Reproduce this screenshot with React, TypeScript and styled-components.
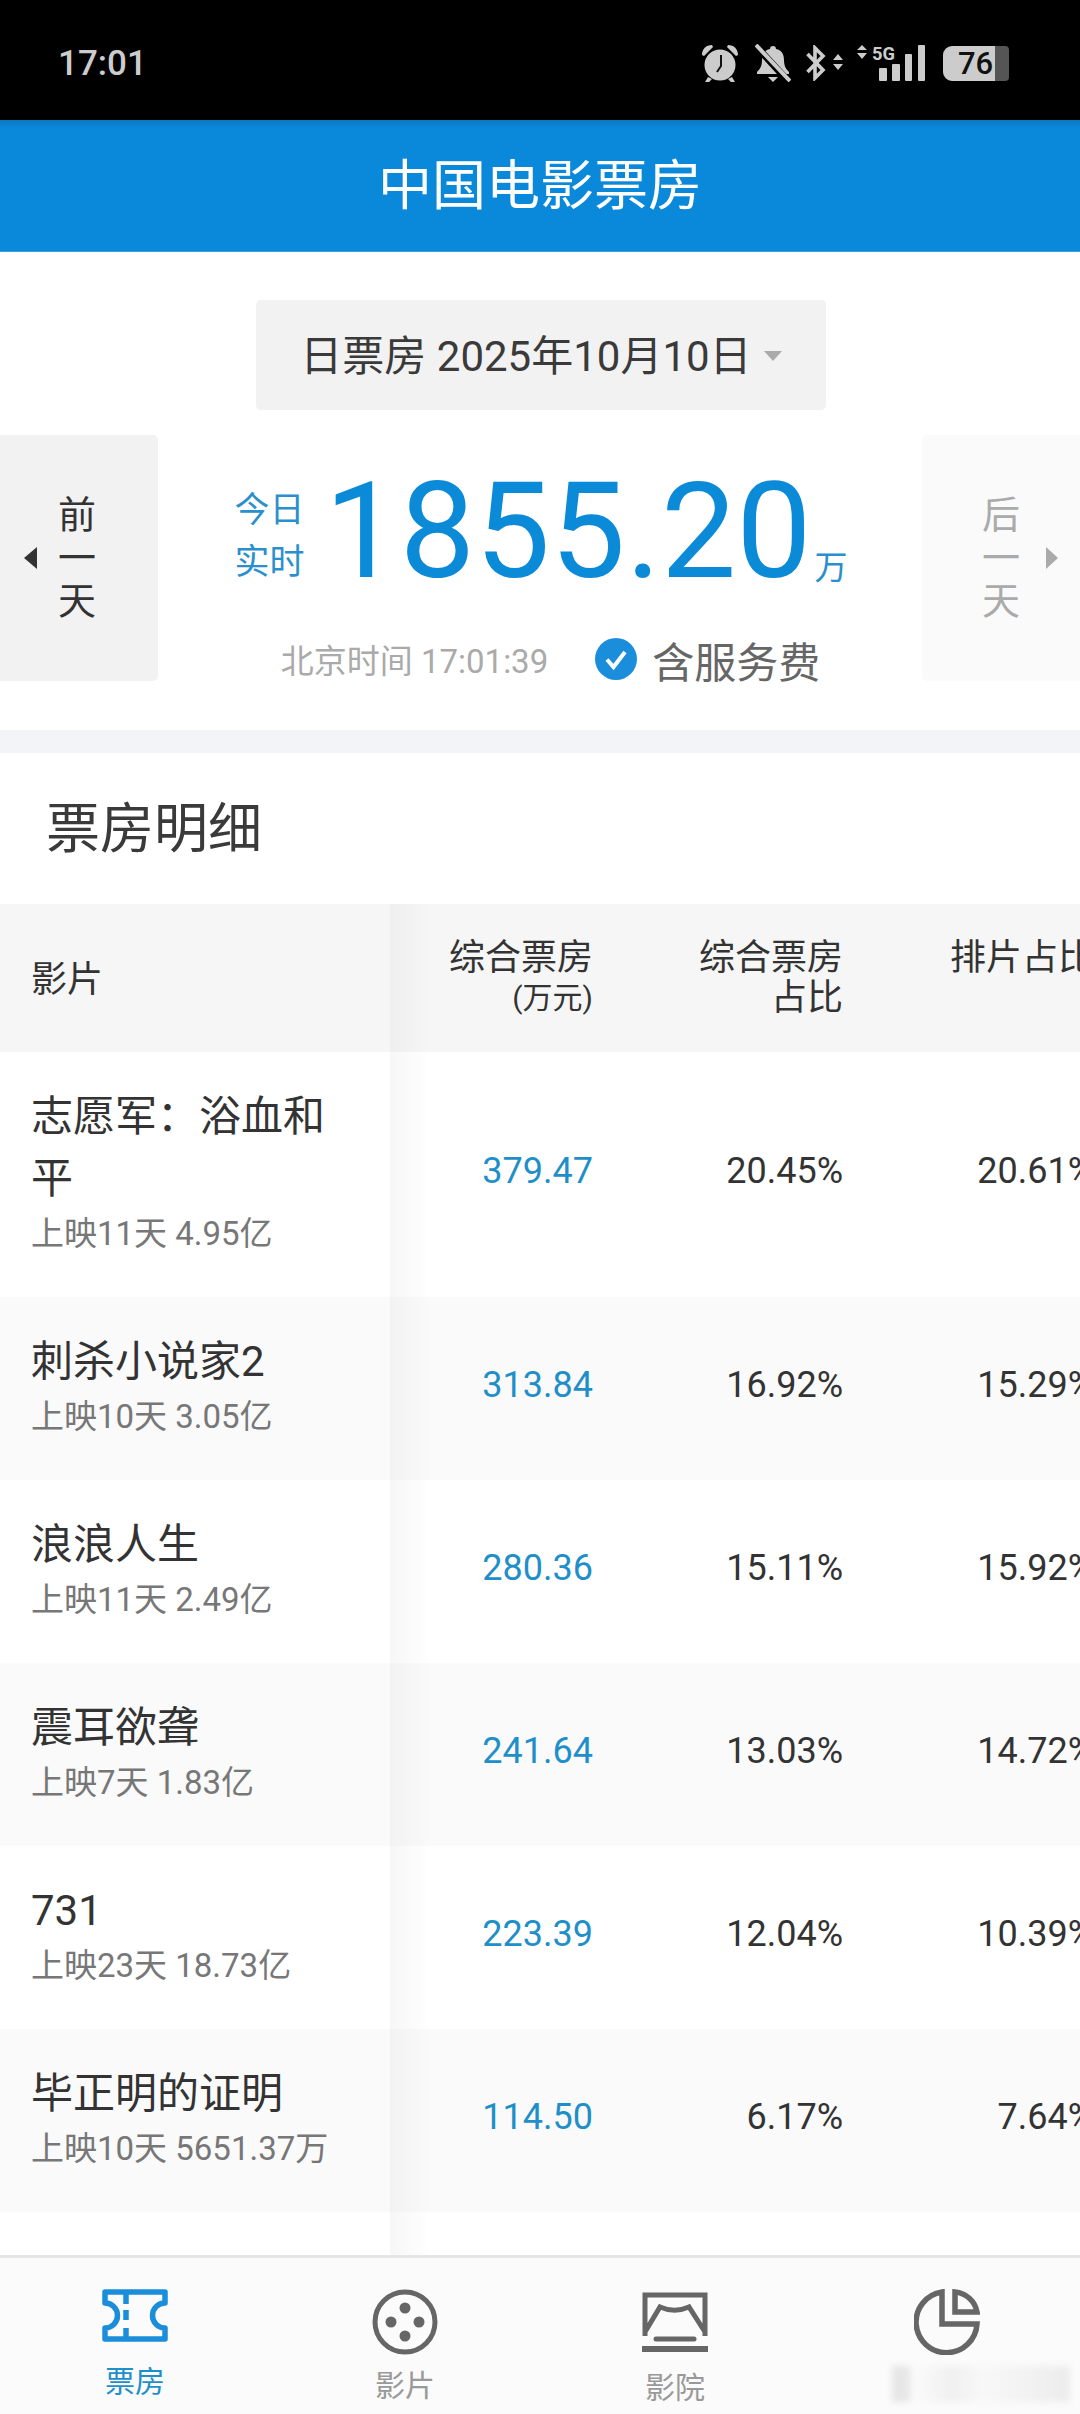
import * as React from 'react';
import styled, {createGlobalStyle} from 'styled-components';

const GlobalStyle = createGlobalStyle`
  html, body {
    margin: 0;
    padding: 0;
    background: #fff;
  }
  body {
    font-family: Roboto, "Noto Sans CJK SC", sans-serif;
  }
`;

const Page = styled.div`
  width: 1080px;
  height: 2414px;
  display: flex;
  flex-direction: column;
  overflow: hidden;
  background: #fff;
`;

const StatusBar = styled.div`
  height: 120px;
  flex: none;
  background: #000;
  display: flex;
  align-items: center;
  justify-content: space-between;
  padding: 6px 71px 0 58px;
  box-sizing: border-box;
  color: #ccc;
`;

const Clock = styled.span`
  font-size: 35px;
  font-weight: 500;
`;

const StatusIcons = styled.div`
  display: flex;
  align-items: center;
`;

const StatusIcon = styled.svg<{$gap?: number}>`
  display: block;
  margin-left: ${p => p.$gap ?? 0}px;
`;

const Battery = styled.div`
  width: 66px;
  height: 35px;
  margin-left: 18px;
  border-radius: 9px 4px 4px 9px;
  background: linear-gradient(to right, #ccc 52px, #555 52px);
  color: #111;
  font-size: 31px;
  font-weight: 500;
  line-height: 35px;
  padding-left: 15px;
  box-sizing: border-box;
`;

const Header = styled.header`
  height: 132px;
  flex: none;
  box-sizing: border-box;
  background: linear-gradient(to bottom, #0a78bf 0, #0a88da 8px);
  color: #fff;
  font-size: 54px;
  line-height: 133px;
  text-align: center;
  border-bottom: 1px solid #3a9fdd;
`;

const Content = styled.main`
  flex: 1;
  min-height: 0;
  overflow: hidden;
`;

const Hero = styled.section`
  padding: 48px 0 49px;
`;

const DateSelect = styled.div`
  width: 570px;
  height: 110px;
  margin: 0 auto 25px 256px;
  padding-bottom: 5px;
  box-sizing: border-box;
  border-radius: 5px;
  background: #f2f2f3;
  color: #3a3a3a;
  font-size: 42px;
  display: flex;
  align-items: center;
  justify-content: center;
  gap: 12px;
`;

const Caret = styled.i`
  width: 0;
  height: 0;
  border-left: 9px solid transparent;
  border-right: 9px solid transparent;
  border-top: 10px solid #aaa;
  margin-top: 7px;
`;

const HeroRow = styled.div`
  display: flex;
  height: 246px;
`;

const DayButton = styled.div<{$next?: boolean}>`
  width: 158px;
  flex: none;
  display: flex;
  flex-direction: ${p => (p.$next ? 'row' : 'row-reverse')};
  align-items: center;
  justify-content: ${p => (p.$next ? 'flex-start' : 'flex-end')};
  gap: ${p => (p.$next ? '25px' : '20px')};
  padding: ${p => (p.$next ? '0 0 0 59px' : '0 0 0 24px')};
  box-sizing: border-box;
  background: ${p => (p.$next ? '#fafafa' : '#f2f2f3')};
  border-radius: ${p => (p.$next ? '5px 0 0 5px' : '0 5px 5px 0')};
  color: ${p => (p.$next ? '#aaa' : '#333')};
  font-size: 38px;
`;

const DayText = styled.div`
  width: 40px;
  line-height: 43px;
  text-align: center;
`;

const DayArrow = styled.i<{$next?: boolean}>`
  width: 0;
  height: 0;
  border-top: 11px solid transparent;
  border-bottom: 11px solid transparent;
  ${p =>
    p.$next ? 'border-left: 12px solid #aaa;' : 'border-right: 13px solid #333;'}
`;

const HeroCenter = styled.div`
  flex: 1;
  display: flex;
  flex-direction: column;
  align-items: center;
`;

const Amount = styled.div`
  display: flex;
  align-items: flex-end;
  height: 150px;
  margin-top: 22px;
  padding-left: 2px;
  color: #0b8ad8;
`;

const AmountLabel = styled.div`
  font-size: 35px;
  line-height: 52px;
  color: #2a8fcd;
  margin-bottom: 18px;
  margin-right: 20px;
`;

const AmountValue = styled.div`
  font-size: 134px;
  line-height: 150px;
`;

const AmountUnit = styled.div`
  font-size: 33px;
  line-height: 40px;
  color: #2a8fcd;
  margin-left: 3px;
  margin-bottom: 19px;
`;

const Meta = styled.div`
  display: flex;
  align-items: center;
  margin: 30px 0 0 21px;
  height: 44px;
`;

const ClockText = styled.span`
  font-size: 33px;
  color: #aaa;
  margin-right: 47px;
`;

const FeeText = styled.span`
  font-size: 42px;
  color: #666;
  margin-left: 15px;
`;

const Band = styled.div`
  height: 23px;
  background: #f3f4f8;
`;

const SectionTitle = styled.h2`
  margin: 0;
  height: 151px;
  padding-left: 46px;
  box-sizing: border-box;
  font-size: 54px;
  font-weight: 400;
  line-height: 154px;
  color: #3a3a3a;
`;

const Row = styled.div<{$striped?: boolean; $head?: boolean}>`
  display: grid;
  grid-template-columns: 390px 203px 250px 251px;
  width: 1094px;
  background: ${p => (p.$head ? '#f6f6f6' : p.$striped ? '#fafafa' : '#fff')};
`;

const NameCell = styled.div`
  position: relative;
  padding: 34px 31px 39px;
  box-sizing: border-box;
  &::after {
    content: '';
    position: absolute;
    top: 0;
    bottom: 0;
    left: 100%;
    width: 42px;
    background: linear-gradient(to right, rgba(0, 0, 0, 0.03), rgba(0, 0, 0, 0));
  }
`;

const HeadName = styled(NameCell)`
  height: 148px;
  padding: 0 31px;
  font-size: 36px;
  line-height: 152px;
  color: #333;
`;

const HeadCell = styled.div`
  padding-top: 34px;
  font-size: 36px;
  line-height: 40px;
  color: #333;
  text-align: right;
`;

const HeadUnit = styled.div`
  font-size: 30px;
`;

const FilmName = styled.div`
  font-size: 42px;
  line-height: 62px;
  color: #333;
`;

const FilmMeta = styled.div`
  font-size: 33px;
  line-height: 48px;
  color: #777;
`;

const ValueCell = styled.div<{$accent?: boolean}>`
  display: flex;
  align-items: center;
  justify-content: flex-end;
  padding-bottom: 8px;
  font-size: 36px;
  color: ${p => (p.$accent ? '#1f8fc9' : '#333')};
`;

const BlankRow = styled(Row)`
  height: 60px;
`;

const TabBar = styled.nav`
  height: 159px;
  flex: none;
  box-sizing: border-box;
  display: grid;
  grid-template-columns: repeat(4, 270px);
  background: #fbfbfb;
  border-top: 3px solid #e6e6e6;
`;

const Tab = styled.div<{$active?: boolean}>`
  display: flex;
  flex-direction: column;
  align-items: center;
  padding-top: 31px;
  font-size: 30px;
  line-height: 40px;
  color: ${p => (p.$active ? '#1f8fc9' : '#999')};
`;

const TabIcon = styled.svg<{$top?: number; $bottom: number; $left?: number}>`
  display: block;
  margin: ${p => p.$top ?? 0}px 0 ${p => p.$bottom}px ${p => p.$left ?? 0}px;
`;

const BlurredLabel = styled.div`
  width: 178px;
  height: 36px;
  margin-left: 72px;
  margin-top: -2px;
  filter: blur(3px);
  background: linear-gradient(
    to right,
    #e6e6e6 0,
    #e6e6e6 14px,
    #fbfbfb 22px,
    #f0f0f0 60px,
    #f8f8f8 90px,
    #f0f0f0 150px,
    #ececec 178px
  );
`;

const films = [
  {name: '志愿军：浴血和平', meta: '上映11天 4.95亿', box: '379.47', share: '20.45%', shows: '20.61%'},
  {name: '刺杀小说家2', meta: '上映10天 3.05亿', box: '313.84', share: '16.92%', shows: '15.29%'},
  {name: '浪浪人生', meta: '上映11天 2.49亿', box: '280.36', share: '15.11%', shows: '15.92%'},
  {name: '震耳欲聋', meta: '上映7天 1.83亿', box: '241.64', share: '13.03%', shows: '14.72%'},
  {name: '731', meta: '上映23天 18.73亿', box: '223.39', share: '12.04%', shows: '10.39%'},
  {name: '毕正明的证明', meta: '上映10天 5651.37万', box: '114.50', share: '6.17%', shows: '7.64%'},
];

const AlarmIcon = () => (
  <StatusIcon width="38" height="39" viewBox="0 0 38 39">
    <circle cx="19" cy="21" r="15.5" fill="#ccc" />
    <path d="M1 11C1 5 5 1 11 1L12 3 3 12Z M37 11C37 5 33 1 27 1L26 3 35 12Z" fill="#ccc" />
    <path d="M7 33 4 38h4l3-3Z M31 33l3 5h-4l-3-3Z" fill="#ccc" />
    <path d="M20 11v11l-4 6" fill="none" stroke="#111" strokeWidth="2" />
  </StatusIcon>
);

const BellOffIcon = () => (
  <StatusIcon $gap={16} width="36" height="38" viewBox="0 0 36 38">
    <path
      d="M18 2c2 0 3 1 3 3 6 1 8 6 8 11 0 6 2 9 5 12v2H2v-2c3-3 5-6 5-12 0-5 2-10 8-11 0-2 1-3 3-3Z M13 33h10l-5 5Z"
      fill="#ccc"
    />
    <path d="M0 1 34 38" stroke="#000" strokeWidth="7" />
    <path d="M1 1 35 37" stroke="#ccc" strokeWidth="4" />
  </StatusIcon>
);

const BluetoothIcon = () => (
  <StatusIcon $gap={15} width="38" height="36" viewBox="0 0 38 36">
    <path d="M1.500 9 17 25 9 33V3L17 11 1.500 27" fill="none" stroke="#ccc" strokeWidth="3.6" />
    <path d="M27 15h10l-5-6Z M27 19h10l-5 6Z" fill="#ccc" />
  </StatusIcon>
);

const SignalIcon = () => (
  <StatusIcon $gap={13} width="68" height="38" viewBox="0 0 68 38">
    <path d="M0 6h10L5 1Z M0 9h10L5 15Z" fill="#ccc" />
    <text x="15" y="16" fontFamily="Roboto, sans-serif" fontSize="19" fontWeight="700" fill="#ccc" textLength="23" lengthAdjust="spacingAndGlyphs">
      5G
    </text>
    <rect x="22" y="24" width="8" height="13" rx="1" fill="#ccc" />
    <rect x="35" y="20" width="8" height="17" rx="1" fill="#ccc" />
    <rect x="48" y="10" width="7" height="27" rx="1" fill="#ccc" />
    <rect x="61" y="1" width="7" height="36" rx="1" fill="#ccc" />
  </StatusIcon>
);

const CheckIcon = () => (
  <svg width="42" height="42" viewBox="0 0 42 42">
    <circle cx="21" cy="21" r="21" fill="#1a8ddb" />
    <path d="M12 21.5 18.5 29 30 14" fill="none" stroke="#fff" strokeWidth="4" />
  </svg>
);

const TicketIcon = () => (
  <TabIcon $bottom={20} width="66" height="53" viewBox="0 0 66 53">
    <path
      d="M3 3H63V14A12.500 12.500 0 0 0 63 39V50H3V39A12.500 12.500 0 0 0 3 14Z"
      fill="none"
      stroke="#1a8ddb"
      strokeWidth="5.500"
      strokeLinejoin="round"
    />
    <path d="M24 1V15M24 21V31M24 39V52" stroke="#1a8ddb" strokeWidth="5.500" />
  </TabIcon>
);

const ReelIcon = () => (
  <TabIcon $bottom={11} width="66" height="66" viewBox="0 0 66 66">
    <circle cx="33" cy="33" r="30" fill="none" stroke="#666" strokeWidth="5" />
    <circle cx="33" cy="19" r="5.500" fill="#666" />
    <circle cx="33" cy="47" r="5.500" fill="#666" />
    <circle cx="19" cy="33" r="5.500" fill="#666" />
    <circle cx="47" cy="33" r="5.500" fill="#666" />
  </TabIcon>
);

const CinemaIcon = () => (
  <TabIcon $top={3} $bottom={10} width="66" height="66" viewBox="0 0 66 66">
    <path
      d="M3 44V3H63V44M3 40 18 15C27 19 38 19 47 15L63 40"
      fill="none"
      stroke="#666"
      strokeWidth="5"
    />
    <path d="M14 47H52" stroke="#666" strokeWidth="5" strokeLinecap="round" />
    <path d="M1 57H65" stroke="#666" strokeWidth="6" strokeLinecap="round" />
  </TabIcon>
);

const PieIcon = () => (
  <TabIcon $bottom={13} $left={4} width="66" height="66" viewBox="0 0 66 66">
    <path
      d="M28 3A30.500 30.500 0 1 0 63 35H28Z"
      fill="none"
      stroke="#666"
      strokeWidth="5.500"
    />
    <path d="M41 3V23H63C61 12 52 4 41 3Z" fill="none" stroke="#666" strokeWidth="5.500" />
  </TabIcon>
);

const App = () => {
  return (
    <Page>
      <GlobalStyle />
      <StatusBar>
        <Clock>17:01</Clock>
        <StatusIcons>
          <AlarmIcon />
          <BellOffIcon />
          <BluetoothIcon />
          <SignalIcon />
          <Battery>76</Battery>
        </StatusIcons>
      </StatusBar>
      <Header>中国电影票房</Header>
      <Content>
        <Hero>
          <DateSelect>
            日票房 2025年10月10日
            <Caret />
          </DateSelect>
          <HeroRow>
            <DayButton>
              <DayText>
                前<br />一<br />天
              </DayText>
              <DayArrow />
            </DayButton>
            <HeroCenter>
              <Amount>
                <AmountLabel>
                  今日
                  <br />
                  实时
                </AmountLabel>
                <AmountValue>1855.20</AmountValue>
                <AmountUnit>万</AmountUnit>
              </Amount>
              <Meta>
                <ClockText>北京时间 17:01:39</ClockText>
                <CheckIcon />
                <FeeText>含服务费</FeeText>
              </Meta>
            </HeroCenter>
            <DayButton $next>
              <DayText>
                后<br />一<br />天
              </DayText>
              <DayArrow $next />
            </DayButton>
          </HeroRow>
        </Hero>
        <Band />
        <SectionTitle>票房明细</SectionTitle>
        <Row $head>
          <HeadName>影片</HeadName>
          <HeadCell>
            综合票房
            <HeadUnit>(万元)</HeadUnit>
          </HeadCell>
          <HeadCell>
            综合票房
            <br />
            占比
          </HeadCell>
          <HeadCell>排片占比</HeadCell>
        </Row>
        {films.map((film, i) => (
          <Row key={film.name} $striped={i % 2 === 1}>
            <NameCell>
              <FilmName>{film.name}</FilmName>
              <FilmMeta>{film.meta}</FilmMeta>
            </NameCell>
            <ValueCell $accent>{film.box}</ValueCell>
            <ValueCell>{film.share}</ValueCell>
            <ValueCell>{film.shows}</ValueCell>
          </Row>
        ))}
        <BlankRow>
          <NameCell />
        </BlankRow>
      </Content>
      <TabBar>
        <Tab $active>
          <TicketIcon />
          票房
        </Tab>
        <Tab>
          <ReelIcon />
          影片
        </Tab>
        <Tab>
          <CinemaIcon />
          影院
        </Tab>
        <Tab>
          <PieIcon />
          <BlurredLabel />
        </Tab>
      </TabBar>
    </Page>
  );
};

export default App;
